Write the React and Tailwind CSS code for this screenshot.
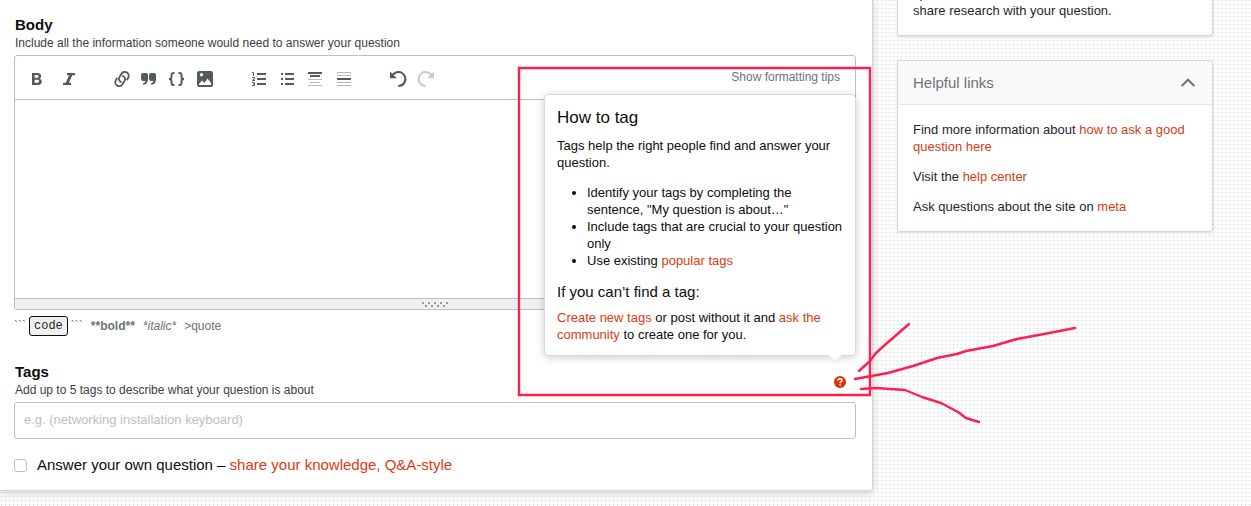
import React from "react";

const dots =
  "bg-[#fefefe] bg-[linear-gradient(to_bottom,transparent_1px,#fefefe_1px),linear-gradient(to_right,#cfcfcf_1px,#fefefe_1px)] bg-[size:4px_4px] bg-[position:1px_0px]";

function Tool({ label, muted, children }) {
  return (
    <button
      type="button"
      aria-label={label}
      className={`flex h-7 w-7 items-center justify-center ${muted ? "text-[#c8ccd0]" : "text-[#535a60]"}`}
    >
      <svg width="18" height="18" viewBox="0 0 18 18" fill="currentColor" className="overflow-visible" aria-hidden="true">
        {children}
      </svg>
    </button>
  );
}

function Link({ children }) {
  return (
    <a href="#" className="text-[#dd3a12]">
      {children}
    </a>
  );
}

const quoteMark =
  "M0 5a2 2 0 0 1 2-2h3a2 2 0 0 1 2 2v4.500c0 3-1.700 5-4.800 5.500v-2c1.400-.4 2-1 2.200-2H2a2 2 0 0 1-2-2z";

function Toolbar() {
  return (
    <div className="flex h-11 items-start justify-between border-b border-[#bbc0c4] pr-[15px] pl-2">
      <div className="flex gap-[25px] pt-[9px]">
        <div className="flex gap-1">
          <Tool label="Bold">
            <path
              fillRule="evenodd"
              d="M4 3h5.600c2.200 0 3.600 1.300 3.600 3.200 0 1.100-.6 2-1.500 2.500 1.300.4 2.100 1.500 2.100 2.900 0 2.100-1.600 3.400-4 3.400H4V3zm2.600 2.100v2.600h2.500c.9 0 1.400-.5 1.400-1.300s-.5-1.300-1.400-1.300H6.600zm0 4.600v3.100h2.900c1 0 1.600-.6 1.600-1.500s-.6-1.600-1.600-1.600H6.600z"
            />
          </Tool>
          <Tool label="Italic">
            <path d="M7 3h8v2.200h-2.700L8.900 12.800H11V15H3v-2.200h2.700L9.100 5.200H7z" />
          </Tool>
        </div>
        <div className="flex">
          <Tool label="Link">
            <g fill="none" stroke="currentColor" strokeWidth="1.800">
              <path d="M9.300 5.900c2.300.4 3.500 2.900 2.300 4.900l-2.100 3.500a3.900 3.900 0 0 1-6.800-3.800l1.500-2.700" />
              <path d="M8.700 12.100c-2.300-.4-3.500-2.900-2.300-4.900l2.100-3.500a3.900 3.900 0 0 1 6.800 3.800l-1.500 2.700" />
            </g>
          </Tool>
          <Tool label="Blockquote">
            <path d={quoteMark} />
            <path d={quoteMark} transform="translate(8 0)" />
          </Tool>
          <Tool label="Code sample">
            <g fill="none" stroke="currentColor" strokeWidth="2">
              <path d="M5.500 3H4.500a2 2 0 0 0-2 2v2c0 1.200-.8 2-2.500 2 1.700 0 2.500.8 2.500 2v2a2 2 0 0 0 2 2h1" />
              <path d="M9.500 3h1a2 2 0 0 1 2 2v2c0 1.200.8 2 2.500 2-1.700 0-2.500.8-2.500 2v2a2 2 0 0 1-2 2h-1" />
            </g>
          </Tool>
          <Tool label="Image">
            <path
              fillRule="evenodd"
              d="M2 1h12a2 2 0 0 1 2 2v12a2 2 0 0 1-2 2H2a2 2 0 0 1-2-2V3a2 2 0 0 1 2-2zm2.500 2a1.700 1.700 0 1 0 0 3.400 1.700 1.700 0 0 0 0-3.400zM2 15h12v-2l-3.500-4.500L7.500 13 5 10.500 2 14z"
            />
          </Tool>
        </div>
        <div className="flex">
          <Tool label="Numbered list">
            <path d="M7 3h9v2H7zM7 8h9v2H7zM7 13h9v2H7z" />
            <path
              fill="none"
              stroke="currentColor"
              d="M2 2.500h1.500V6M2 7.500h2.500V9L2.500 10v.5H5M2 12.500h2.500v3H2M3 14h1.500"
            />
          </Tool>
          <Tool label="Bulleted list">
            <path d="M3 3h2v2H3zM3 8h2v2H3zM3 13h2v2H3zM7 3h9v2H7zM7 8h9v2H7zM7 13h9v2H7z" />
          </Tool>
          <Tool label="Heading">
            <path d="M2 2h14v2H2zM4 5h10v2H4z" />
            <path fill="#b4b8bc" d="M2 9h14v1H2zM4 12h10v1H4zM2 15h14v1H2z" />
          </Tool>
          <Tool label="Horizontal rule">
            <path d="M3 8h14v2H3z" />
            <path fill="#b4b8bc" d="M3 2h14v1H3zM3 5h14v1H3zM3 12h14v1H3zM3 15h14v1H3z" />
          </Tool>
        </div>
        <div className="flex">
          <Tool label="Undo">
            <path d="M3 1.500v6.700h6.800z" />
            <path fill="none" stroke="currentColor" strokeWidth="2" d="M5.500 5.200a7 7 0 1 1 5.800 10.800" />
          </Tool>
          <Tool label="Redo" muted>
            <path d="M19 1.500v6.700h-6.800z" />
            <path fill="none" stroke="currentColor" strokeWidth="2" d="M16.500 5.200a7 7 0 1 0-5.800 10.800" />
          </Tool>
        </div>
      </div>
      <button type="button" className="mt-[11px] text-[12px] leading-5 text-[#6a737c]">
        Show formatting tips
      </button>
    </div>
  );
}

function TagHelp() {
  return (
    <div
      role="tooltip"
      className="absolute right-0 bottom-[42px] w-[312px] rounded-[5px] border border-[#d6d9dc] bg-white p-3 text-[13px] leading-[17px] text-[#0c0d0e] shadow-[0_2px_8px_rgba(12,13,14,0.2)]"
    >
      <h2 className="mb-2 text-[17px] leading-[22px]">How to tag</h2>
      <p className="mb-[13px]">Tags help the right people find and answer your question.</p>
      <ul className="mb-[13px] ml-[30px] list-disc">
        <li>Identify your tags by completing the sentence, "My question is about…"</li>
        <li>Include tags that are crucial to your question only</li>
        <li>
          Use existing <Link>popular tags</Link>
        </li>
      </ul>
      <h3 className="mb-[7px] text-[15px] leading-5">If you can’t find a tag:</h3>
      <p>
        <Link>Create new tags</Link> or post without it and <Link>ask the community</Link> to create one for you.
      </p>
      <svg width="16" height="8" viewBox="0 0 16 8" className="absolute right-3 -bottom-[7px]" aria-hidden="true">
        <path d="M0 0h16L8 7.500z" fill="#fff" />
        <path d="M.5.500 8 7.500 15.500.5" fill="none" stroke="#dfe1e3" />
      </svg>
    </div>
  );
}

function Annotations() {
  return (
    <svg
      width="600"
      height="400"
      viewBox="510 50 600 400"
      className="pointer-events-none absolute top-[50px] left-[510px]"
      fill="none"
      stroke="#ff1f4f"
      strokeWidth="2.400"
      strokeLinecap="round"
      strokeLinejoin="round"
      aria-hidden="true"
    >
      <path strokeLinejoin="miter" d="M519 68h351v327H519z" />
      <path d="M859 371l11-10 6-8 10-9 23-20" />
      <path d="M855 379l33-6 25-7 24-8 20-4 9-3 27-5 24-7 27-5 31-6" />
      <path d="M861 389l15-1 29 2 17 7 19 6 17 9 8 6 13 4" />
    </svg>
  );
}

export default function App() {
  return (
    <div className={`relative flex min-h-screen items-start gap-6 overflow-hidden pr-[38px] font-['Liberation_Sans',Arial,sans-serif] ${dots}`}>
      <main className="min-w-0 flex-1 rounded-br-[3px] border-r border-b border-[#d6d9dc] bg-white pt-[15px] pr-4 pb-[15px] pl-[14px] shadow-[0_2px_8px_rgba(12,13,14,0.2)]">
        <label htmlFor="body" className="block pl-px text-[15px] leading-5 font-bold text-[#0c0d0e]">
          Body
        </label>
        <p className="mb-1 pl-px text-[12px] leading-4 text-[#3b4045]">
          Include all the information someone would need to answer your question
        </p>
        <div className="overflow-hidden rounded-[3px] border border-[#bbc0c4] bg-white">
          <Toolbar />
          <textarea id="body" className="block h-[198px] w-full resize-none p-3 text-[13px] outline-none" />
          <div className="flex h-[11px] items-center justify-center border-t border-[#bbc0c4] bg-[#eff0f1]">
            <svg width="26" height="5" viewBox="0 0 26 5" fill="#9199a1" aria-hidden="true">
              <path d="M0 0h2v2H0zM6 0h2v2H6zM12 0h2v2h-2zM18 0h2v2h-2zM24 0h2v2h-2zM3 3h2v2H3zM9 3h2v2H9zM15 3h2v2h-2zM21 3h2v2h-2z" />
            </svg>
          </div>
        </div>

        <div className="mt-[6px] flex h-5 items-center text-[12px] leading-4 text-[#6a737c]">
          <span>```</span>
          <code className="mx-[3px] flex h-5 items-center rounded-[3px] border border-[#0c0d0e] bg-[#eff0f1] px-1 font-['Liberation_Mono',monospace] text-[12px] text-[#242729]">
            code
          </code>
          <span>```</span>
          <b className="ml-2">**bold**</b>
          <i className="ml-2">*italic*</i>
          <span className="ml-2">&gt;quote</span>
        </div>

        <div className="relative mt-[26px] mb-1 flex items-center justify-between pr-[10px] pl-px">
          <div>
            <label htmlFor="tags" className="block text-[15px] leading-5 font-bold text-[#0c0d0e]">
              Tags
            </label>
            <p className="text-[12px] leading-4 text-[#3b4045]">Add up to 5 tags to describe what your question is about</p>
          </div>
          <button type="button" aria-label="How to tag" className="mt-1">
            <svg width="12" height="12" viewBox="0 0 12 12" aria-hidden="true">
              <circle cx="6" cy="6" r="6" fill="#dd3306" />
              <path
                d="M4.100 4.500C4.100 3.300 4.900 2.700 6 2.700s2 .6 2 1.600c0 1.400-1.800 1.300-1.900 2.900"
                fill="none"
                stroke="#fff"
                strokeWidth="1.500"
              />
              <path d="M5.300 8h1.600v1.500H5.300z" fill="#fff" />
            </svg>
          </button>
          <TagHelp />
        </div>
        <input
          id="tags"
          type="text"
          placeholder="e.g. (networking installation keyboard)"
          className="block h-[37px] w-full rounded-[3px] border border-[#bbc0c4] bg-white px-[9px] pb-[2px] text-[13px] outline-none placeholder:text-[#bbc0c4]"
        />
        <div className="mt-4 flex h-5 items-center gap-[10px] text-[15px] leading-5 text-[#0c0d0e]">
          <input
            id="self-answer"
            type="checkbox"
            className="h-[13px] w-[13px] appearance-none rounded-[3px] border border-[#bbc0c4] bg-white"
          />
          <span>
            <label htmlFor="self-answer">Answer your own question – </label>
            <Link>share your knowledge, Q&amp;A-style</Link>
          </span>
        </div>
      </main>

      <aside className="flex w-[316px] shrink-0 flex-col gap-6 text-[13px] leading-[17px] text-[#242729]">
        <section className="overflow-hidden rounded-b-[3px] border border-t-0 border-[#d6d9dc] bg-white px-[15px] pb-4 shadow-[0_1px_4px_rgba(12,13,14,0.12)]">
          <p className="-mt-[15px]">
            specific
            <br />
            share research with your question.
          </p>
        </section>
        <section className="rounded-[3px] border border-[#d6d9dc] bg-white shadow-[0_1px_4px_rgba(12,13,14,0.12)]">
          <button
            type="button"
            className="flex h-11 w-full items-center justify-between rounded-t-[3px] border-b border-[#e4e6e8] bg-[#fafafb] pr-[17px] pl-[15px] text-[15px] leading-5 text-[#6a737c]"
          >
            Helpful links
            <svg width="14" height="9" viewBox="0 0 14 9" fill="none" stroke="currentColor" strokeWidth="2" aria-hidden="true">
              <path d="M.7 8 7 1.700 13.300 8" />
            </svg>
          </button>
          <div className="flex flex-col gap-[13px] px-[15px] py-4">
            <p>
              Find more information about <Link>how to ask a good question here</Link>
            </p>
            <p>
              Visit the <Link>help center</Link>
            </p>
            <p>
              Ask questions about the site on <Link>meta</Link>
            </p>
          </div>
        </section>
      </aside>
      <Annotations />
    </div>
  );
}
